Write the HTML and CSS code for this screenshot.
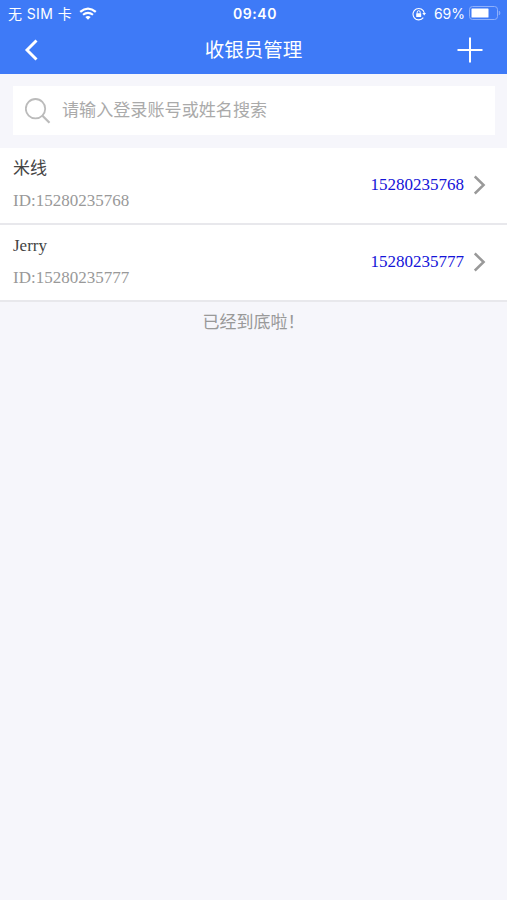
FILE: index.html
```
<!DOCTYPE html>
<html lang="zh-CN">
    <head>
        <meta charset="UTF-8">
        <title>收银员管理</title>
        <link rel="stylesheet" href="styles.css">
    </head>
    <body>
        <header class="header">
            <div class="status-bar">
                <div class="status-left">
                    <span class="carrier">无 SIM 卡</span>
                    <svg class="wifi" viewBox="0 0 18 13">
                        <path d="M1.2 4.9 Q9 -1.7 16.8 4.9" fill="none" stroke="#fff" stroke-width="2.3" />
                        <path d="M4 7.8 Q9 3.8 14 7.8" fill="none" stroke="#fff" stroke-width="2.1" />
                        <path d="M6.3 10 Q9 7.8 11.7 10 L9 12.7 Z" fill="#fff" />
                    </svg>
                </div>
                <span class="time">09:40</span>
                <div class="status-right">
                    <!-- Rotation lock -->
                    <svg class="rotation" viewBox="0 0 14 14">
                        <path d="M11.3 10.6 A5.7 5.7 0 1 1 12.3 6" fill="none" stroke="#fff" stroke-width="1.1" />
                        <path d="M10.3 6 H14 L12.2 8.6 Z" fill="#fff" />
                        <path d="M5.2 6.5 V5.2 A1.5 1.5 0 0 1 8.2 5.2 V6.5" fill="none" stroke="#fff" stroke-width="1" />
                        <rect x="4.2" y="6.2" width="5" height="3.8" rx="0.5" fill="#fff" />
                    </svg>
                    <span>69%</span>
                    <svg class="battery" viewBox="0 0 33 15">
                        <rect x="0.5" y="0.5" width="28" height="13" rx="3" fill="none" stroke="#8fb0fb" />
                        <rect x="2.5" y="2.5" width="17" height="9" rx="0.6" fill="#fff" />
                        <path d="M30.2 5 Q32 7 30.2 9 Z" fill="#8fb0fb" stroke="#8fb0fb" stroke-width="0.6" />
                    </svg>
                </div>
            </div>
            <div class="nav-bar">
                <svg class="back" viewBox="0 0 14 22">
                    <path d="M12.5 1.5 L3 11 L12.5 20.5" fill="none" stroke="#fff" stroke-width="2.9" />
                </svg>
                <h1>收银员管理</h1>
                <svg class="add" viewBox="0 0 26 26">
                    <path d="M13 0.5 V25.5 M0.5 13 H25.5" fill="none" stroke="#fff" stroke-width="2" />
                </svg>
            </div>
        </header>

        <div class="search">
            <svg class="search-icon" viewBox="0 0 26 26">
                <circle cx="10.5" cy="10.7" r="9.7" fill="none" stroke="#bbb" stroke-width="1.8" />
                <path d="M17.2 17.5 L24.5 24.8" fill="none" stroke="#bbb" stroke-width="2.2" />
            </svg>
            <input type="text" class="search-input" placeholder="请输入登录账号或姓名搜索">
        </div>

        <div class="list">
            <div class="item">
                <div class="info">
                    <div class="name">米线</div>
                    <div class="account">ID:15280235768</div>
                </div>
                <a class="phone" href="tel:15280235768">15280235768</a>
                <svg class="arrow" viewBox="0 0 12 20">
                    <path d="M0.8 1.5 L9.6 10 L0.8 18.5" fill="none" stroke="#999" stroke-width="2.5" />
                </svg>
            </div>
            <div class="item">
                <div class="info">
                    <div class="name">Jerry</div>
                    <div class="account">ID:15280235777</div>
                </div>
                <a class="phone" href="tel:15280235777">15280235777</a>
                <svg class="arrow" viewBox="0 0 12 20">
                    <path d="M0.8 1.5 L9.6 10 L0.8 18.5" fill="none" stroke="#999" stroke-width="2.5" />
                </svg>
            </div>
        </div>
        <div class="list-end">已经到底啦！</div>
    </body>
</html>
```
FILE: styles.css
```
* {
    box-sizing: border-box;
}

body {
    margin: 0;
    min-height: 100vh;
    background: #f6f6fb;
    font-family: 'Liberation Serif', 'Noto Sans CJK SC', serif;
    font-size: 17px;
}

svg {
    display: block;
    flex-shrink: 0;
}

.header {
    height: 74px;
    background: #3e7af7;
    color: #fff;
    font-family: 'Inter', 'Noto Sans CJK SC', sans-serif;
}

.status-bar {
    display: grid;
    grid-template-columns: 1fr auto 1fr;
    align-items: center;
    height: 28px;
    padding: 0 5px 0 8px;
    font-size: 14px;
    line-height: 28px;
}

.status-left,
.status-right {
    display: flex;
    align-items: center;
}

.status-left {
    gap: 7px;
}

.status-right {
    justify-content: flex-end;
}

.carrier {
    letter-spacing: 0.4px;
}

.wifi {
    width: 18px;
    height: 13px;
    margin-bottom: 2px;
}

.time {
    font-weight: 600;
    letter-spacing: 0.6px;
}

.rotation {
    width: 14px;
    height: 14px;
    margin-right: 8px;
    margin-bottom: 1px;
}

.battery {
    width: 33px;
    height: 15px;
    margin-left: 4px;
    margin-bottom: 1px;
}

.nav-bar {
    display: flex;
    align-items: center;
    justify-content: space-between;
    height: 44px;
    padding: 0 24px;
}

.nav-bar h1 {
    margin: 0;
    font-size: 19.5px;
    font-weight: 400;
    line-height: 44px;
}

.back {
    width: 14px;
    height: 22px;
    margin-right: 12px;
}

.add {
    width: 26px;
    height: 26px;
}

.search {
    display: flex;
    align-items: center;
    height: 49px;
    margin: 12px 12px 13px 13px;
    padding: 0 12px;
    background: #fff;
}

.search-icon {
    width: 26px;
    height: 26px;
}

.search-input {
    flex: 1;
    margin-left: 11px;
    padding: 0;
    border: none;
    outline: none;
    background: none;
    font-family: inherit;
    font-size: 17.1px;
}

.search-input::placeholder {
    color: #aaa;
}

.item {
    display: flex;
    align-items: center;
    height: 77px;
    padding: 0 21px 2px 13px;
    background: #fff;
    border-bottom: 2px solid #e8e8ec;
}

.info {
    flex: 1;
}

.name,
.account {
    height: 32px;
    line-height: 32px;
}

.name {
    color: #444;
}

.account {
    color: #999;
}

.phone {
    color: #1414d8;
    text-decoration: none;
}

.arrow {
    width: 12px;
    height: 20px;
    margin-left: 10px;
}

.list-end {
    height: 42px;
    line-height: 42px;
    text-align: center;
    color: #999;
}
```
